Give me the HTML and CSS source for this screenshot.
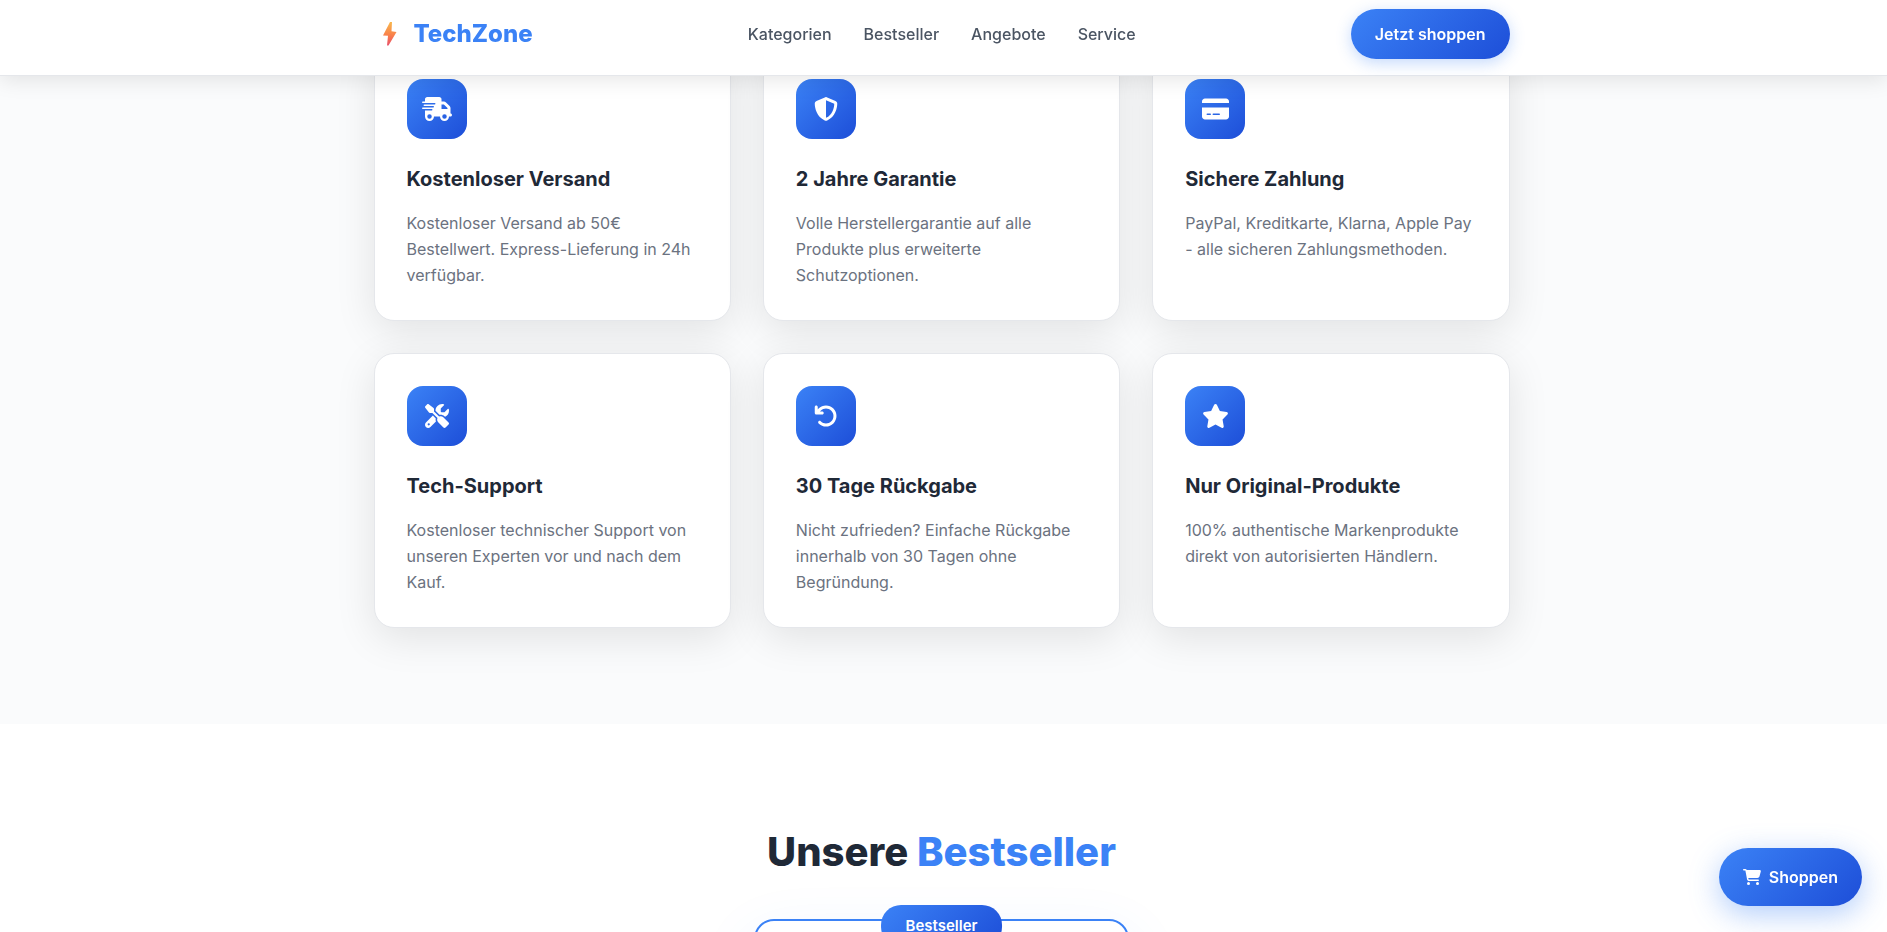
FILE: index.html
```html
<!DOCTYPE html>
<html lang="de">
<head>
<meta charset="utf-8">
<meta name="viewport" content="width=device-width, initial-scale=1">
<title>TechZone</title>
<link rel="stylesheet" href="styles.css">
</head>
<body>
<header class="header">
  <div class="container header-inner">
    <a class="logo" href="#">
      <svg class="logo-icon" viewBox="0 0 32 32" aria-hidden="true">
        <defs>
          <linearGradient id="bolt" x1="0" y1="0" x2="0" y2="1">
            <stop offset="0" stop-color="#f8b84e"/>
            <stop offset="0.55" stop-color="#f9814a"/>
            <stop offset="1" stop-color="#e8506a"/>
          </linearGradient>
        </defs>
        <path fill="url(#bolt)" d="M18 4h-2L9 17.500l5 .3L13 27.500h1.500L22.500 14l-5-.7z"/>
      </svg>
      <span>TechZone</span>
    </a>
    <nav class="nav">
      <a href="#kategorien">Kategorien</a>
      <a href="#bestseller">Bestseller</a>
      <a href="#angebote">Angebote</a>
      <a href="#service">Service</a>
    </nav>
    <button class="button button-header" type="button">Jetzt shoppen</button>
  </div>
</header>

<main>
  <section class="features" id="service">
    <div class="container features-grid">
      <article class="card">
        <div class="card-icon"><svg viewBox="0 0 640 512" aria-hidden="true"><path d="M112 0C85.500 0 64 21.500 64 48V96H16c-8.800 0-16 7.200-16 16s7.200 16 16 16H64 272c8.800 0 16 7.200 16 16s-7.200 16-16 16H64 48c-8.800 0-16 7.200-16 16s7.200 16 16 16H64 240c8.800 0 16 7.200 16 16s-7.200 16-16 16H64 16c-8.800 0-16 7.200-16 16s7.200 16 16 16H64 208c8.800 0 16 7.200 16 16s-7.200 16-16 16H64V416c0 53 43 96 96 96s96-43 96-96H384c0 53 43 96 96 96s96-43 96-96h32c17.700 0 32-14.300 32-32s-14.300-32-32-32V288 256 237.300c0-17-6.700-33.300-18.700-45.300L512 114.700c-12-12-28.300-18.700-45.300-18.700H416V48c0-26.500-21.500-48-48-48H112zM544 237.300V256H416V160h50.700L544 237.300zM160 368a48 48 0 1 1 0 96 48 48 0 1 1 0-96zm272 48a48 48 0 1 1 96 0 48 48 0 1 1 -96 0z"/></svg></div>
        <h3 class="card-title">Kostenloser Versand</h3>
        <p class="card-text">Kostenloser Versand ab 50€ Bestellwert. Express-Lieferung in 24h verfügbar.</p>
      </article>
      <article class="card">
        <div class="card-icon"><svg viewBox="0 0 512 512" aria-hidden="true"><path d="M256 0c4.600 0 9.200 1 13.400 2.900L457.700 82.800c22 9.300 38.400 31 38.300 57.200c-.5 99.200-41.300 280.700-213.600 363.200c-16.700 8-36.100 8-52.800 0C57.300 420.700 16.500 239.200 16 140c-.1-26.200 16.300-47.900 38.300-57.200L242.700 2.900C246.800 1 251.400 0 256 0zm0 66.800V444.800C394 378 431.100 230.100 432 141.400L256 66.800l0 0z"/></svg></div>
        <h3 class="card-title">2 Jahre Garantie</h3>
        <p class="card-text">Volle Herstellergarantie auf alle Produkte plus erweiterte Schutzoptionen.</p>
      </article>
      <article class="card">
        <div class="card-icon"><svg viewBox="0 0 576 512" aria-hidden="true"><path d="M64 32C28.700 32 0 60.700 0 96v32H576V96c0-35.300-28.700-64-64-64H64zM576 224H0V416c0 35.300 28.700 64 64 64H512c35.300 0 64-28.700 64-64V224zM112 352h64c8.800 0 16 7.200 16 16s-7.200 16-16 16H112c-8.800 0-16-7.200-16-16s7.200-16 16-16zm112 16c0-8.800 7.200-16 16-16H368c8.800 0 16 7.200 16 16s-7.200 16-16 16H240c-8.800 0-16-7.200-16-16z"/></svg></div>
        <h3 class="card-title">Sichere Zahlung</h3>
        <p class="card-text">PayPal, Kreditkarte, Klarna, Apple Pay - alle sicheren Zahlungsmethoden.</p>
      </article>
      <article class="card">
        <div class="card-icon"><svg viewBox="0 0 512 512" aria-hidden="true"><path d="M78.600 5C69.100-2.400 55.600-1.500 47 7L7 47c-8.500 8.500-9.400 22-2.100 31.600l80 104c4.500 5.900 11.600 9.400 19 9.400h54.100l109 109c-14.700 29-10 65.400 14.300 89.600l112 112c12.500 12.500 32.800 12.500 45.300 0l64-64c12.500-12.500 12.500-32.800 0-45.300l-112-112c-24.200-24.200-60.600-29-89.600-14.300l-109-109V104c0-7.500-3.500-14.500-9.400-19L78.600 5zM19.900 396.100C7.200 408.800 0 426.100 0 444.100C0 481.600 30.400 512 67.900 512c18 0 35.300-7.200 48-19.900L233.700 374.300c-7.800-20.900-9-43.600-3.600-65.100l-61.700-61.700L19.900 396.100zM512 144c0-10.500-1.100-20.700-3.200-30.500c-2.400-11.200-16.100-14.100-24.200-6l-63.900 63.900c-3 3-7.100 4.700-11.300 4.700H352c-8.800 0-16-7.200-16-16V102.600c0-4.200 1.700-8.300 4.700-11.300l63.900-63.900c8.100-8.100 5.200-21.800-6-24.200C388.700 1.100 378.500 0 368 0C288.500 0 224 64.500 224 144l0 .8 85.300 85.300c36-9.100 75.800 .5 104 28.700L429 274.500c49-23 83-72.800 83-130.500zM56 432a24 24 0 1 1 48 0 24 24 0 1 1 -48 0z"/></svg></div>
        <h3 class="card-title">Tech-Support</h3>
        <p class="card-text">Kostenloser technischer Support von unseren Experten vor und nach dem Kauf.</p>
      </article>
      <article class="card">
        <div class="card-icon"><svg viewBox="0 0 512 512" aria-hidden="true"><path d="M125.700 160H176c17.700 0 32 14.300 32 32s-14.300 32-32 32H48c-17.700 0-32-14.300-32-32V64c0-17.700 14.300-32 32-32s32 14.300 32 32v51.200L97.600 97.600c87.500-87.500 229.300-87.500 316.800 0s87.500 229.300 0 316.800s-229.300 87.500-316.800 0c-12.500-12.500-12.500-32.800 0-45.300s32.800-12.500 45.300 0c62.500 62.500 163.800 62.500 226.300 0s62.500-163.800 0-226.300s-163.800-62.500-226.300 0L125.700 160z"/></svg></div>
        <h3 class="card-title">30 Tage Rückgabe</h3>
        <p class="card-text">Nicht zufrieden? Einfache Rückgabe innerhalb von 30 Tagen ohne Begründung.</p>
      </article>
      <article class="card">
        <div class="card-icon"><svg viewBox="0 0 576 512" aria-hidden="true"><path d="M316.900 18C311.600 7 300.400 0 288.100 0s-23.400 7-28.800 18L195 150.300 51.400 171.500c-12 1.800-22 10.200-25.700 21.700s-.7 24.200 7.900 32.700L137.800 329 113.200 474.700c-2 12 3 24.200 12.900 31.300s23 8 33.800 2.300l128.300-68.500 128.300 68.500c10.800 5.700 23.900 4.900 33.800-2.300s14.900-19.300 12.900-31.300L438.500 329 542.700 225.900c8.600-8.500 11.700-21.200 7.900-32.700s-13.700-19.900-25.700-21.700L381.200 150.300 316.900 18z"/></svg></div>
        <h3 class="card-title">Nur Original-Produkte</h3>
        <p class="card-text">100% authentische Markenprodukte direkt von autorisierten Händlern.</p>
      </article>
    </div>
  </section>

  <section class="bestseller" id="bestseller">
    <div class="container bestseller-inner">
      <h2 class="section-title">Unsere <span class="accent">Bestseller</span></h2>
      <article class="product">
        <span class="badge">Bestseller</span>
      </article>
    </div>
  </section>
</main>

<button class="button button-floating" type="button">
  <svg class="cart-icon" viewBox="0 0 576 512" aria-hidden="true"><path d="M0 24C0 10.700 10.700 0 24 0H69.500c22 0 41.500 12.800 50.600 32h411c26.300 0 45.500 25 38.600 50.400l-41 152.300c-8.500 31.400-37 53.300-69.500 53.300H170.700l5.400 28.500c2.200 11.300 12.100 19.500 23.600 19.500H488c13.300 0 24 10.700 24 24s-10.700 24-24 24H199.700c-34.600 0-64.300-24.600-70.700-58.500L77.400 54.500c-.7-3.800-4-6.500-7.900-6.500H24C10.700 48 0 37.300 0 24zM128 464a48 48 0 1 1 96 0 48 48 0 1 1 -96 0zm336-48a48 48 0 1 1 0 96 48 48 0 1 1 0-96z"/></svg>
  Shoppen
</button>
</body>
</html>
```
FILE: styles.css
```css
:root {
  --blue: #3b82f6;
  --gradient: linear-gradient(135deg, #3b82f6, #1d4ed8);
  --ink: #1f2937;
}

* {
  box-sizing: border-box;
}

body {
  margin: 0;
  font-family: Inter, "Liberation Sans", sans-serif;
  font-size: 16px;
  line-height: 26px;
  color: var(--ink);
  background: #fff;
}

h2,
h3,
p {
  margin: 0;
}

.container {
  max-width: 1204px;
  margin: 0 auto;
  padding: 0 36px 0 32px;
}

/* Header */
.header {
  position: fixed;
  top: 0;
  left: 0;
  right: 0;
  z-index: 10;
  padding: 9px 0 16px;
  background: #fff;
  border-bottom: 1px solid #e5e7eb;
  box-shadow: 0 4px 20px rgba(0, 0, 0, 0.1);
}

.header-inner {
  display: flex;
  align-items: center;
  justify-content: space-between;
}

.logo {
  display: flex;
  align-items: center;
  gap: 8px;
  font-size: 24px;
  font-weight: 800;
  color: var(--blue);
  text-decoration: none;
}

.logo-icon {
  width: 32px;
  height: 32px;
}

.nav {
  display: flex;
  gap: 32px;
}

.nav a {
  font-weight: 500;
  color: #4b5563;
  text-decoration: none;
}

.button {
  display: inline-flex;
  align-items: center;
  gap: 8px;
  border: 0;
  border-radius: 50px;
  font: inherit;
  font-weight: 600;
  color: #fff;
  background: var(--gradient);
  cursor: pointer;
}

.button-header {
  padding: 12px 24px;
  box-shadow: 0 4px 15px rgba(59, 130, 246, 0.3);
}

.button-floating {
  position: fixed;
  right: 25px;
  bottom: 26px;
  z-index: 10;
  padding: 16px 24px;
  box-shadow: 0 8px 30px rgba(59, 130, 246, 0.4);
}

.cart-icon {
  width: 18px;
  height: 16px;
  fill: #fff;
}

/* Features */
.features {
  padding: 46px 0 96px;
  background: #fafbfc;
}

.features-grid {
  display: grid;
  grid-template-columns: repeat(3, 1fr);
  gap: 32px;
}

.card {
  padding: 32px;
  border: 1px solid #e5e7eb;
  border-radius: 20px;
  background: #fff;
  box-shadow: 0 10px 40px rgba(0, 0, 0, 0.1);
}

.card-icon {
  display: flex;
  align-items: center;
  justify-content: center;
  width: 60px;
  height: 60px;
  margin-bottom: 24px;
  border-radius: 16px;
  background: var(--gradient);
}

.card-icon svg {
  height: 24px;
  fill: #fff;
}

.card-title {
  margin-bottom: 15px;
  font-size: 20px;
  font-weight: 700;
  line-height: 32px;
}

.card-text {
  color: #6b7280;
}

/* Bestseller */
.bestseller {
  padding: 96px 0;
}

.bestseller-inner {
  display: flex;
  flex-direction: column;
  align-items: center;
  gap: 35px;
}

.section-title {
  font-size: 40px;
  font-weight: 800;
  line-height: 64px;
}

.accent {
  color: var(--blue);
}

.product {
  position: relative;
  width: 33%;
  min-height: 400px;
  border: 2px solid var(--blue);
  border-radius: 20px;
  background: #fff;
  box-shadow: 0 20px 60px rgba(59, 130, 246, 0.1);
}

.badge {
  position: absolute;
  top: -16px;
  left: 50%;
  transform: translateX(-50%);
  padding: 8px 25px;
  border-radius: 20px;
  font-size: 15px;
  font-weight: 600;
  line-height: 26px;
  color: #fff;
  background: var(--gradient);
}
```
